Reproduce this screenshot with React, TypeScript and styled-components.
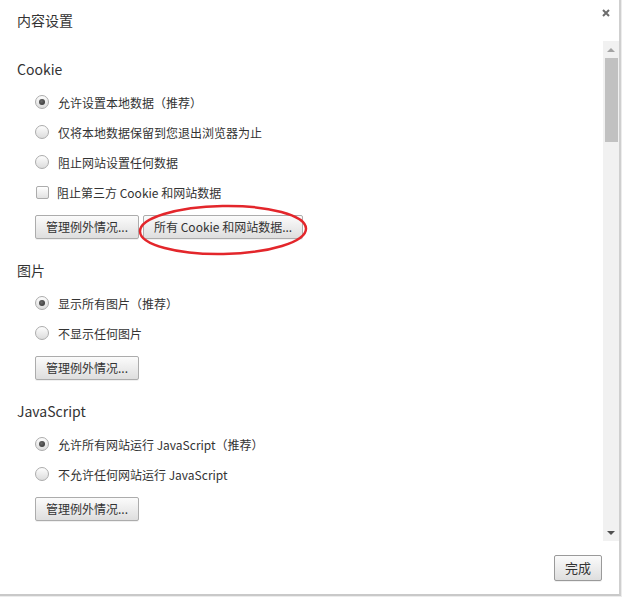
import React from "react";
import styled, { createGlobalStyle } from "styled-components";

const Global = createGlobalStyle`
  html, body { margin: 0; padding: 0; }
  body {
    background: #ececec;
    font-family: "Noto Sans", "Noto Sans CJK SC", sans-serif;
    color: #333;
  }
`;

const Dialog = styled.div`
  width: 619px;
  height: 594px;
  background: #fff;
  border-right: 2px solid #cfcfcf;
  border-bottom: 2px solid #c9c9c9;
  display: flex;
  flex-direction: column;
  font-family: "Noto Sans CJK SC", "Noto Sans", sans-serif;
`;

const Header = styled.div`
  height: 41px;
  flex: none;
  display: flex;
  justify-content: space-between;
  align-items: flex-start;
  padding: 9px 9px 0 17px;
  box-sizing: border-box;
`;

const Title = styled.div`
  margin-top: 1px;
  font-size: 14px;
  line-height: 20px;
  color: #333;
`;

const Close = styled.svg`
  width: 8px;
  height: 8px;
  display: block;
`;

const Body = styled.div`
  height: 500px;
  flex: none;
  display: flex;
`;

const Content = styled.div`
  flex: 1;
  overflow: hidden;
  padding: 18px 0 0 17px;
  display: flex;
  flex-direction: column;
  gap: 21px;
`;

const Section = styled.section`
  display: flex;
  flex-direction: column;
`;

const Heading = styled.div`
  font-size: 14px;
  line-height: 20px;
  height: 20px;
  color: #333;
  margin-bottom: 8px;
`;

const Options = styled.div`
  margin-left: 18px;
  display: flex;
  flex-direction: column;
`;

const Row = styled.label`
  height: 30px;
  display: flex;
  align-items: center;
  font-size: 12px;
  color: #333;
  gap: 9px;
`;

const Radio = styled.span<{ $checked?: boolean }>`
  width: 14px;
  height: 14px;
  box-sizing: border-box;
  border-radius: 50%;
  border: 1px solid #acacac;
  background: linear-gradient(#fdfdfd, #dcdcdc);
  display: flex;
  align-items: center;
  justify-content: center;
  flex: none;
  &::after {
    content: "";
    display: ${(p) => (p.$checked ? "block" : "none")};
    width: 6px;
    height: 6px;
    border-radius: 50%;
    background: radial-gradient(circle at 40% 40%, #6a6a6a, #2e2e2e);
  }
`;

const Check = styled.span`
  width: 13px;
  height: 13px;
  box-sizing: border-box;
  margin-left: 1px;
  margin-right: -1px;
  border-radius: 2px;
  border: 1px solid #acacac;
  background: linear-gradient(#ffffff, #e2e2e2);
  flex: none;
`;

const ButtonRow = styled.div`
  position: relative;
  margin-top: 8px;
  display: flex;
  gap: 4px;
`;

const Button = styled.button`
  height: 24px;
  padding: 0 10px;
  box-sizing: border-box;
  border: 1px solid #acacac;
  border-radius: 2px;
  background: linear-gradient(#fbfbfb, #dedede);
  font-family: "Noto Sans CJK SC", "Noto Sans", sans-serif;
  font-size: 12px;
  color: #333;
  line-height: 20px;
  box-shadow: 0 1px 0 rgba(0, 0, 0, 0.06);
`;

const Ellipse = styled.svg`
  position: absolute;
  left: 103px;
  top: -11px;
  width: 170px;
  height: 52px;
  overflow: visible;
  pointer-events: none;
`;

const Scrollbar = styled.div`
  width: 16px;
  flex: none;
  background: #f1f1f1;
  display: flex;
  flex-direction: column;
  align-items: center;
`;

const ArrowBox = styled.div`
  height: 17px;
  width: 100%;
  display: flex;
  align-items: center;
  justify-content: center;
`;

const Arrow = styled.span<{ $down?: boolean }>`
  width: 0;
  height: 0;
  border-left: 4px solid transparent;
  border-right: 4px solid transparent;
  ${(p) =>
    p.$down
      ? "border-top: 4px solid #505050;"
      : "border-bottom: 4px solid #a3a3a3;"}
`;

const Thumb = styled.div`
  width: 13px;
  margin-left: 1px;
  height: 84px;
  background: #c1c1c1;
`;

const Track = styled.div`
  flex: 1;
`;

const Footer = styled.div`
  flex: 1;
  display: flex;
  justify-content: flex-end;
  align-items: flex-start;
  padding: 14px 17px 0 0;
`;

const DoneButton = styled(Button)`
  width: 48px;
  height: 26px;
  padding: 0;
  font-size: 13px;
  border-color: #9a9a9a;
`;

type Opt = { label: string; type: "radio" | "check"; checked?: boolean };

const sections: { title: string; options: Opt[]; buttons: string[] }[] = [
  {
    title: "Cookie",
    options: [
      { label: "允许设置本地数据（推荐）", type: "radio", checked: true },
      { label: "仅将本地数据保留到您退出浏览器为止", type: "radio" },
      { label: "阻止网站设置任何数据", type: "radio" },
      { label: "阻止第三方 Cookie 和网站数据", type: "check" },
    ],
    buttons: ["管理例外情况...", "所有 Cookie 和网站数据..."],
  },
  {
    title: "图片",
    options: [
      { label: "显示所有图片（推荐）", type: "radio", checked: true },
      { label: "不显示任何图片", type: "radio" },
    ],
    buttons: ["管理例外情况..."],
  },
  {
    title: "JavaScript",
    options: [
      { label: "允许所有网站运行 JavaScript（推荐）", type: "radio", checked: true },
      { label: "不允许任何网站运行 JavaScript", type: "radio" },
    ],
    buttons: ["管理例外情况..."],
  },
];

export default function App() {
  return (
    <>
      <Global />
      <Dialog>
        <Header>
          <Title>内容设置</Title>
          <Close viewBox="0 0 8 8">
            <path d="M1 1 L7 7 M7 1 L1 7" stroke="#6d6d6d" strokeWidth="2" />
          </Close>
        </Header>
        <Body>
          <Content>
            {sections.map((s, si) => (
              <Section key={s.title}>
                <Heading>{s.title}</Heading>
                <Options>
                  {s.options.map((o) => (
                    <Row key={o.label}>
                      {o.type === "radio" ? <Radio $checked={o.checked} /> : <Check />}
                      <span>{o.label}</span>
                    </Row>
                  ))}
                  <ButtonRow>
                    {s.buttons.map((b) => (
                      <Button key={b}>{b}</Button>
                    ))}
                    {si === 0 && (
                      <Ellipse viewBox="0 0 170 52">
                        <ellipse
                          cx="85"
                          cy="26"
                          rx="83"
                          ry="24"
                          fill="none"
                          stroke="#e3262b"
                          strokeWidth="2.5"
                          transform="rotate(-1 85 26)"
                        />
                      </Ellipse>
                    )}
                  </ButtonRow>
                </Options>
              </Section>
            ))}
          </Content>
          <Scrollbar>
            <ArrowBox>
              <Arrow />
            </ArrowBox>
            <Thumb />
            <Track />
            <ArrowBox>
              <Arrow $down />
            </ArrowBox>
          </Scrollbar>
        </Body>
        <Footer>
          <DoneButton>完成</DoneButton>
        </Footer>
      </Dialog>
    </>
  );
}
